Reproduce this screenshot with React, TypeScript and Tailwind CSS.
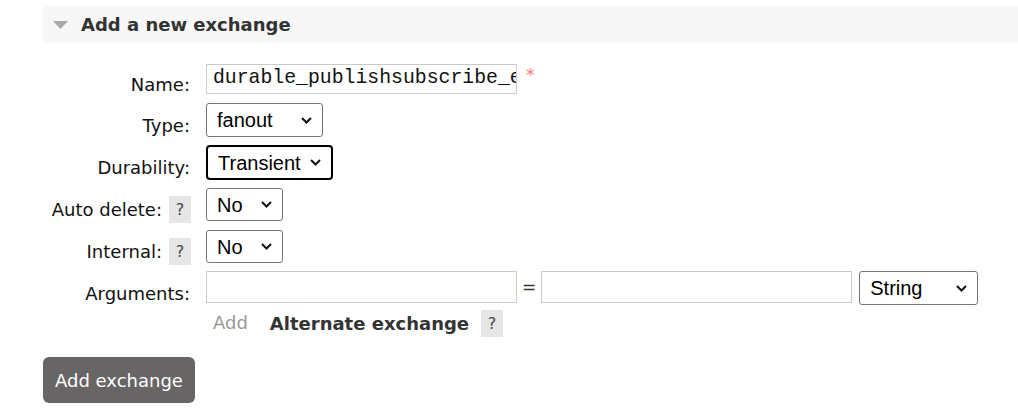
import type { ReactNode } from 'react'

const sans = "font-['DejaVu_Sans',Verdana,sans-serif]"
const arial = "font-['Liberation_Sans',Arial,sans-serif]"

function Chevron() {
  return (
    <svg width="11" height="7" viewBox="0 0 11 7" className="shrink-0">
      <path d="M1 1l4.5 4.5L10 1" fill="none" stroke="#111" strokeWidth="2" />
    </svg>
  )
}

function FakeSelect({ value, width, height, focused }: { value: string; width: string; height: string; focused?: boolean }) {
  return (
    <div
      className={`flex items-center justify-between bg-white pl-[10px] pr-[10px] text-[20px] text-black ${arial} ${width} ${height} ${
        focused ? 'rounded-[4px] border-2 border-black' : 'rounded-[3px] border border-[#767676]'
      }`}
    >
      <span className="leading-none">{value}</span>
      <Chevron />
    </div>
  )
}

function Help() {
  return (
    <span className={`flex h-[27px] w-[22px] items-center justify-center bg-[#e6e6e6] text-[16px] text-[#444] ${sans}`}>?</span>
  )
}

function Row({ label, help, children, className }: { label: string; help?: boolean; children: ReactNode; className: string }) {
  return (
    <div className={`flex items-center ${className}`}>
      <div className="flex w-[148px] items-center justify-end">
        <span className={`mt-[10px] whitespace-nowrap text-[18px] text-[#111] ${sans}`}>{label}</span>
        {help ? (
          <span className="ml-[7px] mt-[10px]">
            <Help />
          </span>
        ) : (
          <span className="w-[1px]" />
        )}
      </div>
      <div className="ml-[15px] flex items-center">{children}</div>
    </div>
  )
}

export default function App() {
  return (
    <div className="min-h-[416px] w-[1018px] bg-white pl-[43px] pt-[6px]">
      <div className="flex h-[37px] items-center rounded-l-[5px] bg-[#f7f7f8] pl-[10px]">
        <svg width="15" height="8" viewBox="0 0 15 8">
          <path d="M0 0h15L7.5 8z" fill="#a9a9a9" />
        </svg>
        <h2 className={`ml-[13px] text-[18px] font-bold text-[#333] ${sans}`}>Add a new exchange</h2>
      </div>

      <Row label="Name:" className="mt-[21px] h-[30px]">
        <div className="flex h-[30px] w-[311px] items-center overflow-hidden whitespace-nowrap border border-[#cccccc] bg-white pl-[6px] font-['Liberation_Mono','Courier_New',monospace] text-[19.8px] text-[#111]">
          durable_publishsubscribe_exchange
        </div>
        <span className={`ml-[9px] -mt-[6px] text-[17px] text-[#f77] ${sans}`}>*</span>
      </Row>

      <Row label="Type:" className="mt-[9px] h-[34px]">
        <FakeSelect value="fanout" width="w-[117px]" height="h-[34px]" />
      </Row>

      <Row label="Durability:" className="mt-[8px] h-[35px]">
        <FakeSelect value="Transient" width="w-[127px]" height="h-[35px]" focused />
      </Row>

      <Row label="Auto delete:" help className="mt-[8px] h-[33px]">
        <FakeSelect value="No" width="w-[77px]" height="h-[33px]" />
      </Row>

      <Row label="Internal:" help className="mt-[9px] h-[33px]">
        <FakeSelect value="No" width="w-[77px]" height="h-[33px]" />
      </Row>

      <Row label="Arguments:" className="mt-[8px] h-[34px]">
        <div className="h-[32px] w-[311px] self-start border border-[#cccccc] bg-white" />
        <span className={`mx-[5px] text-[17px] text-[#333] ${sans}`}>=</span>
        <div className="h-[32px] w-[311px] self-start border border-[#cccccc] bg-white" />
        <div className="ml-[7px]">
          <FakeSelect value="String" width="w-[119px]" height="h-[34px]" />
        </div>
      </Row>

      <div className="ml-[170px] mt-[5px] flex h-[27px] items-center">
        <span className={`-mt-[3px] text-[18px] text-[#999] ${sans}`}>Add</span>
        <span className={`ml-[22px] text-[18px] font-bold text-[#333] ${sans}`}>Alternate exchange</span>
        <span className="ml-[12px]">
          <Help />
        </span>
      </div>

      <button
        className={`mt-[20px] flex h-[46px] w-[152px] items-center justify-center rounded-[6px] bg-[#676566] text-[18px] text-white ${sans}`}
      >
        Add exchange
      </button>
    </div>
  )
}
